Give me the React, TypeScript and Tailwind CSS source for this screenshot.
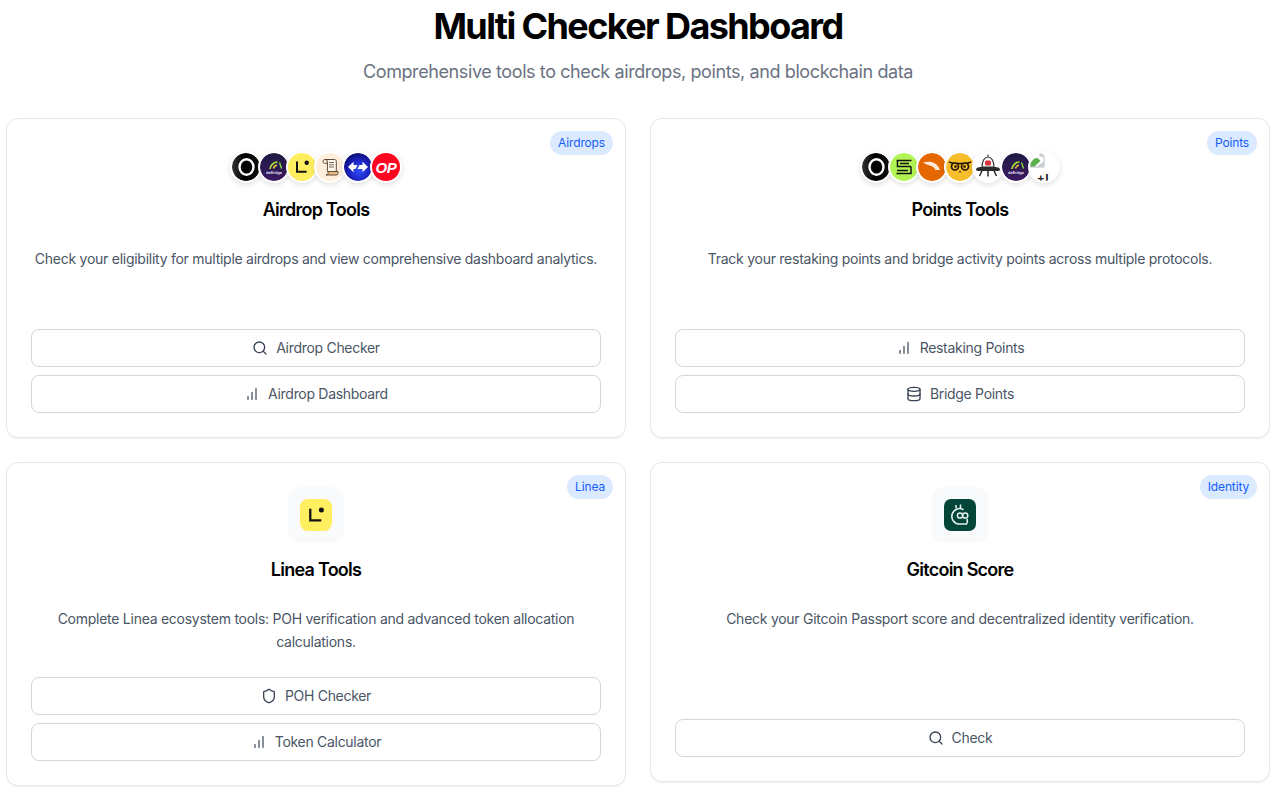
import React from "react";
import { Search, Database, Shield } from "lucide-react";

const Bars = ({ className }: { className: string }) => (
  <svg viewBox="0 0 24 24" fill="none" stroke="currentColor" strokeWidth="2.4" strokeLinecap="round" className={className}>
    <path d="M12 20V10M18 20V4M6 20v-4" />
  </svg>
);

const Ether = () => (
  <svg viewBox="0 0 28 28" className="block w-full h-full">
    <defs>
      <linearGradient id="ethg" x1="0" y1="0" x2="1" y2="0">
        <stop offset="0" stopColor="#333" />
        <stop offset="0.45" stopColor="#000" />
        <stop offset="1" stopColor="#111" />
      </linearGradient>
    </defs>
    <circle cx="14" cy="14" r="14" fill="url(#ethg)" />
    <ellipse cx="14.500" cy="14" rx="7" ry="7.800" fill="none" stroke="#fff" strokeWidth="2.400" />
  </svg>
);
const DeBridge = () => (
  <svg viewBox="0 0 28 28" className="block w-full h-full">
    <defs>
      <linearGradient id="debg" x1="0" y1="0" x2="0" y2="1">
        <stop offset="0" stopColor="#1e1a42" />
        <stop offset="1" stopColor="#3d1a63" />
      </linearGradient>
    </defs>
    <circle cx="14" cy="14" r="14" fill="url(#debg)" />
    <path d="M10 16c.500-3.500 3.500-7 7.500-7" fill="none" stroke="#a6e22e" strokeWidth="1.700" />
    <path d="M13.500 15.500c.500-2 2-3.200 3.500-3.200" fill="none" stroke="#e8c83a" strokeWidth="1.500" />
    <path d="M19.500 9.500l2 6" fill="none" stroke="#7fd03a" strokeWidth="1.500" />
    <text x="14" y="20.500" textAnchor="middle" fontSize="3.600" fontWeight="700" fill="#d8d8e8" fontFamily="Inter, sans-serif">deBridge</text>
  </svg>
);
const LineaMark = () => (
  <svg viewBox="0 0 28 28" className="block w-full h-full">
    <rect width="28" height="28" fill="#ffee5f" />
    <path d="M9 8.500v10.200h9.600" fill="none" stroke="#121212" strokeWidth="2" />
    <circle cx="18.700" cy="9.700" r="2.200" fill="#121212" />
  </svg>
);
const ScrollLogo = () => (
  <svg viewBox="0 0 28 28" className="block w-full h-full">
    <rect width="28" height="28" fill="#ffeedb" />
    <path d="M9 6.500h9.500c1.200 0 1.800.8 1.800 1.800v10.200H11.400V9c0-1.500-.8-2.500-2.400-2.500-1.300 0-2 1-2 2s.7 1.800 1.600 1.800h2.800" fill="#fff6ea" stroke="#5a4a3a" strokeWidth="1" />
    <path d="M13 9.500h5M13 11.800h5M13 14h5" stroke="#5a4a3a" strokeWidth=".8" />
    <path d="M10 22h10c1.300 0 2-.9 2-1.800v-1.700h-9.900v1.800c0 1-.8 1.700-2.100 1.700z" fill="#e9bb81" stroke="#5a4a3a" strokeWidth="1" />
  </svg>
);
const Across = () => (
  <svg viewBox="0 0 28 28" className="block w-full h-full">
    <defs>
      <radialGradient id="acg" cx="0.55" cy="0.62" r="0.62">
        <stop offset="0" stopColor="#2f50ff" />
        <stop offset="0.65" stopColor="#1a1fb8" />
        <stop offset="1" stopColor="#0c0e6e" />
      </radialGradient>
    </defs>
    <circle cx="14" cy="14" r="14" fill="url(#acg)" />
    <path d="M4 14l5.500-5.300v3.300h4l-2 4h-2v3.300z" fill="#fff" />
    <path d="M24 14l-5.500-5.300v3.300h-3l-2 4h5v3.300z" fill="#fff" />
  </svg>
);
const OP = () => (
  <div className="flex h-full w-full items-center justify-center bg-[#ff0420]">
    <span className="text-[15px] font-extrabold italic leading-none tracking-[-0.3px] text-white [font-family:'Liberation_Sans',sans-serif]">OP</span>
  </div>
);
const Ethena = () => (
  <svg viewBox="0 0 28 28" className="block w-full h-full">
    <circle cx="14" cy="14" r="14" fill="#b2f553" />
    <path d="M6.500 7.500h15M7.500 7.500v6h13.500M21 13.500v7H6.500M10 10.500h9M7 17.500h11" fill="none" stroke="#131313" strokeWidth="1.500" />
  </svg>
);
const Orange = () => (
  <svg viewBox="0 0 28 28" className="block w-full h-full">
    <circle cx="14" cy="14" r="14" fill="#e56700" />
    <path d="M5 9.500c5-1.200 9-.9 12 .9 2 1.200 3.500 3 5 6.600h-4.500c-1-2.400-2.400-3.400-4.500-4.100-2.400-.9-5-1.100-8-3.400z" fill="#ffe9d6" />
  </svg>
);
const Owl = () => (
  <svg viewBox="0 0 28 28" className="block w-full h-full">
    <circle cx="14" cy="14" r="14" fill="#f6bd2c" />
    <path d="M3 9l4.500 1.500h13L25 9" fill="none" stroke="#1d1608" strokeWidth="1.400" />
    <circle cx="9" cy="13.500" r="3.500" fill="#f6bd2c" stroke="#1d1608" strokeWidth="1.700" />
    <circle cx="19" cy="13.500" r="3.500" fill="#f6bd2c" stroke="#1d1608" strokeWidth="1.700" />
    <circle cx="9.500" cy="13.500" r="1.300" fill="#1d1608" />
    <circle cx="18.500" cy="13.500" r="1.300" fill="#1d1608" />
    <path d="M13 18l1 2 1-2z" fill="#1d1608" />
  </svg>
);
const Ufo = () => (
  <svg viewBox="0 0 28 28" className="block w-full h-full">
    <rect width="28" height="28" fill="#fff" />
    <path d="M14 1.500v2" stroke="#333" strokeWidth="1.200" />
    <path d="M8 14c0-6 2.500-10 6-10s6 4 6 10z" fill="#f4f4f4" stroke="#333" strokeWidth="1.200" />
    <rect x="11" y="7.500" width="6" height="5" rx="1.500" fill="#d8323c" />
    <path d="M2 16.500c0-1.500 2-2.500 5-2.500h14c3 0 5 1 5 2.500S24.500 18 22 18H6c-2.500 0-4-.3-4-1.500z" fill="#2b2b2b" />
    <path d="M8 18l-2.500 5M14 18v5.500M20 18l2.500 5" stroke="#2b2b2b" strokeWidth="1.500" />
  </svg>
);
const Broken = () => (
  <div className="relative h-full w-full overflow-hidden bg-white">
    <svg viewBox="0 0 16 18" className="absolute -left-[1px] -top-[2px] h-[18px] w-4">
      <path d="M3 1h8l4 4v11H1V9z" fill="#fff" stroke="#b4b8bc" strokeWidth="1" />
      <path d="M11 1v4h4" fill="#dfe3e6" stroke="#b4b8bc" strokeWidth="1" />
      <path d="M1.500 15.500V12c2-3 4-5 6-5 2 0 3 2 4 3l-6 5.500z" fill="#5db04c" />
      <path d="M8 15.500l6.500-5v5z" fill="#c6ccd1" />
    </svg>
    <span className="absolute left-[3px] top-[20px] text-[12px] font-bold leading-[12px] tracking-[1px] text-[#222] [font-family:'Liberation_Sans',sans-serif]">.+L</span>
  </div>
);
const Gitcoin = () => (
  <svg viewBox="0 0 32 32" className="block h-8 w-8">
    <rect width="32" height="32" rx="7" fill="#034539" />
    <path d="M12 6v3.500M16.500 5.500V9" stroke="#e6f0ec" strokeWidth="1.500" />
    <path d="M23 25h-7.500a7.700 7.700 0 1 1 4-14.300" fill="none" stroke="#e6f0ec" strokeWidth="1.600" />
    <path d="M22.500 25c1.300-1.500 1-3.500 .6-5" fill="none" stroke="#e6f0ec" strokeWidth="1.600" />
    <circle cx="16" cy="16.500" r="2.600" fill="none" stroke="#e6f0ec" strokeWidth="1.500" />
    <circle cx="21.200" cy="16.500" r="2.600" fill="none" stroke="#e6f0ec" strokeWidth="1.500" />
  </svg>
);

const Chain = ({ children }: { children: React.ReactNode }) => (
  <div className="-ml-1 box-border h-8 w-8 overflow-hidden rounded-full border-2 border-white bg-white shadow-[0_2px_5px_rgba(0,0,0,0.12)] first:ml-0">
    {children}
  </div>
);

const Badge = ({ label }: { label: string }) => (
  <span className="absolute right-3 top-3 rounded-full bg-blue-100 px-2 py-1 text-xs leading-4 tracking-[-0.15px] text-blue-600">{label}</span>
);

const Btn = ({ icon, label }: { icon: React.ReactNode; label: string }) => (
  <button className="flex h-[38px] w-full items-center justify-center gap-2 rounded-lg border border-gray-300 bg-white text-sm tracking-[-0.3px] text-gray-600">
    {icon}
    {label}
  </button>
);

const Card = ({ badge, visual, title, desc, children }: { badge: string; visual: React.ReactNode; title: string; desc: string; children: React.ReactNode }) => (
  <div className="relative flex min-h-[320px] flex-col items-center rounded-xl border border-gray-200 bg-white p-6 shadow-[0_1px_2px_rgba(0,0,0,0.06)]">
    <Badge label={badge} />
    {visual}
    <h3 className="mb-[23px] mt-[13px] text-lg leading-7 font-semibold tracking-[-0.75px] text-black">{title}</h3>
    <p className="mb-6 text-center text-sm leading-[23px] tracking-[-0.26px] text-gray-600">{desc}</p>
    <div className="mt-auto flex w-full flex-col gap-2">{children}</div>
  </div>
);

const Chains = ({ items }: { items: React.ReactNode[] }) => (
  <div className="flex pt-2">
    {items.map((c, i) => (
      <Chain key={i}>{c}</Chain>
    ))}
  </div>
);

const Box = ({ children }: { children: React.ReactNode }) => (
  <div className="flex h-14 w-14 items-center justify-center rounded-xl bg-gray-50">{children}</div>
);

const iconDark = "h-4 w-4 text-gray-700";
const iconGray = "h-4 w-4 text-gray-500";

export default function App() {
  return (
    <div className="min-h-screen bg-white font-['Inter',sans-serif]">
      <div className="w-[1270px] pb-2 pl-1.5 pt-1.5">
        <h1 className="mb-3 text-center text-4xl font-bold tracking-[-1.6px] text-black">Multi Checker Dashboard</h1>
        <p className="mb-8 text-center text-lg tracking-[-0.4px] text-gray-500">Comprehensive tools to check airdrops, points, and blockchain data</p>
        <div className="grid grid-cols-2 items-start gap-6">
          <Card
            badge="Airdrops"
            title="Airdrop Tools"
            desc="Check your eligibility for multiple airdrops and view comprehensive dashboard analytics."
            visual={<Chains items={[<Ether />, <DeBridge />, <LineaMark />, <ScrollLogo />, <Across />, <OP />]} />}
          >
            <Btn icon={<Search className={iconDark} />} label="Airdrop Checker" />
            <Btn icon={<Bars className={iconGray} />} label="Airdrop Dashboard" />
          </Card>
          <Card
            badge="Points"
            title="Points Tools"
            desc="Track your restaking points and bridge activity points across multiple protocols."
            visual={<Chains items={[<Ether />, <Ethena />, <Orange />, <Owl />, <Ufo />, <DeBridge />, <Broken />]} />}
          >
            <Btn icon={<Bars className={iconGray} />} label="Restaking Points" />
            <Btn icon={<Database className={iconDark} />} label="Bridge Points" />
          </Card>
          <Card
            badge="Linea"
            title="Linea Tools"
            desc="Complete Linea ecosystem tools: POH verification and advanced token allocation calculations."
            visual={
              <Box>
                <div className="h-8 w-8 overflow-hidden rounded-lg">
                  <LineaMark />
                </div>
              </Box>
            }
          >
            <Btn icon={<Shield className={iconDark} />} label="POH Checker" />
            <Btn icon={<Bars className={iconGray} />} label="Token Calculator" />
          </Card>
          <Card
            badge="Identity"
            title="Gitcoin Score"
            desc="Check your Gitcoin Passport score and decentralized identity verification."
            visual={
              <Box>
                <Gitcoin />
              </Box>
            }
          >
            <Btn icon={<Search className={iconDark} />} label="Check" />
          </Card>
        </div>
      </div>
    </div>
  );
}
